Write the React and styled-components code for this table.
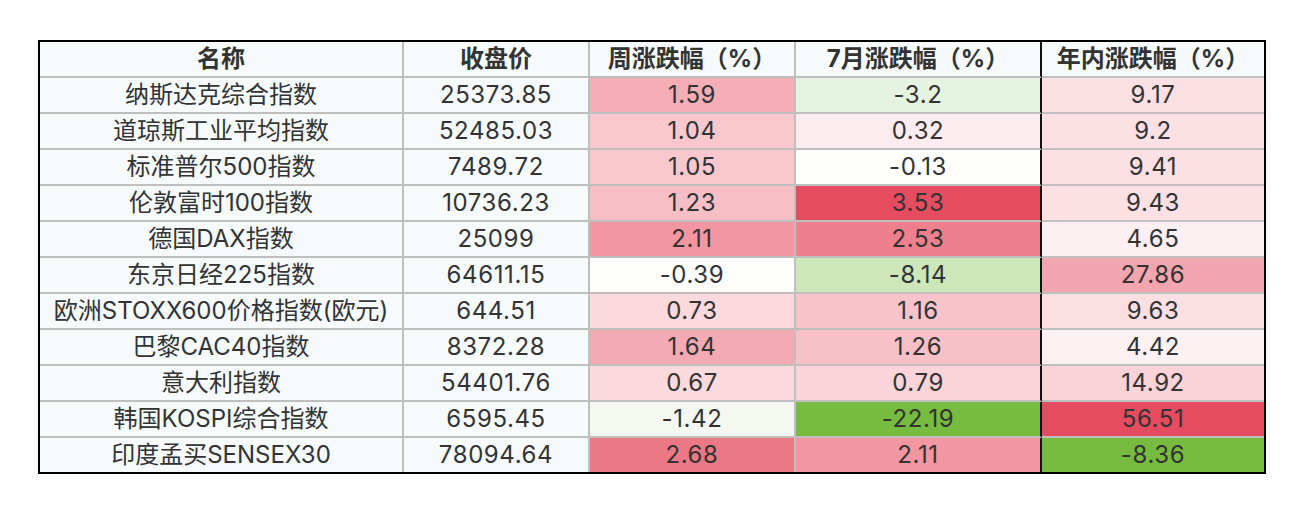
import React from 'react';
import styled, { createGlobalStyle } from 'styled-components';

const GlobalStyle = createGlobalStyle`
  body {
    margin: 0;
    background: #ffffff;
    font-family: Inter, "Noto Sans CJK SC", sans-serif;
  }
`;

const Page = styled.div`
  padding: 40px 0 0 38px;
`;

const Frame = styled.div`
  display: inline-block;
  border: 2px solid #000;
`;

const Table = styled.table`
  border-collapse: separate;
  border-spacing: 0;
  table-layout: fixed;
  width: 1224px;
  color: #333;
  font-size: 24px;
`;

const Row = styled.tr`
  height: 36px;
  &:last-child {
    height: 34px;
  }
`;

const Cell = styled.td`
  padding: 0;
  text-align: center;
  vertical-align: middle;
  white-space: nowrap;
  line-height: 34px;
  letter-spacing: ${(p) => (p.$num ? '0.6px' : '0')};
  background: ${(p) => p.$bg || '#f6fafb'};
  border-bottom: 2px solid #bfbfbf;
  border-right: 2px solid ${(p) => (p.$dark ? '#111' : '#bfbfbf')};
  tbody tr:last-child > & {
    border-bottom: none;
  }
  &:last-child {
    border-right: none;
  }
`;

const HeadCell = styled(Cell).attrs({ as: 'th' })`
  font-weight: 700;
  background: #f6fafb;
`;

const columns = [
  { title: '名称', width: 364 },
  { title: '收盘价', width: 186 },
  { title: '周涨跌幅（%）', width: 206 },
  { title: '7月涨跌幅（%）', width: 246 },
  { title: '年内涨跌幅（%）', width: 222 },
];

const rows = [
  ['纳斯达克综合指数', '25373.85', ['1.59', '#f5adb6'], ['-3.2', '#e7f3e1'], ['9.17', '#fce0e4']],
  ['道琼斯工业平均指数', '52485.03', ['1.04', '#f8c8ce'], ['0.32', '#fdecef'], ['9.2', '#fce0e4']],
  ['标准普尔500指数', '7489.72', ['1.05', '#f8c8ce'], ['-0.13', '#fefefd'], ['9.41', '#fce0e3']],
  ['伦敦富时100指数', '10736.23', ['1.23', '#f7bec5'], ['3.53', '#e64c5f'], ['9.43', '#fce0e3']],
  ['德国DAX指数', '25099', ['2.11', '#f296a1'], ['2.53', '#ee7f8c'], ['4.65', '#fdf0f2']],
  ['东京日经225指数', '64611.15', ['-0.39', '#fdfdfb'], ['-8.14', '#cde7bb'], ['27.86', '#f3a6b0']],
  ['欧洲STOXX600价格指数(欧元)', '644.51', ['0.73', '#fbd9dd'], ['1.16', '#f8c3ca'], ['9.63', '#fcdfe2']],
  ['巴黎CAC40指数', '8372.28', ['1.64', '#f4aab3'], ['1.26', '#f8c0c7'], ['4.42', '#fdf1f3']],
  ['意大利指数', '54401.76', ['0.67', '#fbdade'], ['0.79', '#fad4d9'], ['14.92', '#fad3d8']],
  ['韩国KOSPI综合指数', '6595.45', ['-1.42', '#f5f8f1'], ['-22.19', '#77bb41'], ['56.51', '#e64c5f']],
  ['印度孟买SENSEX30', '78094.64', ['2.68', '#ec7886'], ['2.11', '#f296a1'], ['-8.36', '#77bb41']],
];

export default function App() {
  return (
    <Page>
      <GlobalStyle />
      <Frame>
        <Table>
          <colgroup>
            {columns.map((c) => (
              <col key={c.title} style={{ width: c.width }} />
            ))}
          </colgroup>
          <thead>
            <Row>
              {columns.map((c, i) => (
                <HeadCell key={c.title} $dark={i === 3}>
                  {c.title}
                </HeadCell>
              ))}
            </Row>
          </thead>
          <tbody>
            {rows.map(([name, close, ...changes]) => (
              <Row key={name}>
                <Cell>{name}</Cell>
                <Cell $num>{close}</Cell>
                {changes.map(([value, bg], i) => (
                  <Cell key={i} $num $bg={bg} $dark={i === 1}>
                    {value}
                  </Cell>
                ))}
              </Row>
            ))}
          </tbody>
        </Table>
      </Frame>
    </Page>
  );
}
